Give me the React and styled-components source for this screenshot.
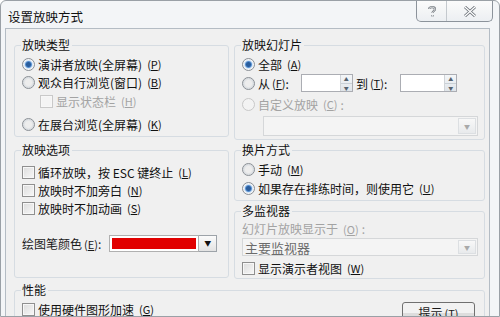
import React from "react";
import styled, { createGlobalStyle } from "styled-components";

const Global = createGlobalStyle`
  html, body { margin: 0; padding: 0; background: #fff; }
  body {
    width: 500px;
    height: 317px;
    overflow: hidden;
    font-family: "Noto Sans CJK SC", "Liberation Sans", sans-serif;
    font-size: 12px;
    color: #1a1a1a;
  }
`;

const Window = styled.div`
  width: 500px;
  height: 317px;
  box-sizing: border-box;
  background: #f3f5f7;
  border: 1px solid #9aa0a6;
  border-radius: 6px 6px 0 0;
  display: flex;
  flex-direction: column;
  overflow: hidden;
`;

const TitleBar = styled.div`
  height: 27px;
  flex: none;
  display: flex;
  justify-content: space-between;
  align-items: flex-start;
  padding-left: 7px;
`;

const Title = styled.div`
  margin-top: 6px;
  font-size: 12.5px;
  color: #111;
`;

const Caption = styled.div`
  display: flex;
  margin-right: 6px;
  height: 20px;
  border: 1px solid #8c939b;
  border-top: none;
  border-radius: 0 0 5px 5px;
  background: linear-gradient(#fbfbfb, #eceff2);
`;

const CapBtn = styled.div`
  width: ${(p) => p.w}px;
  display: flex;
  align-items: center;
  justify-content: center;
  & + & { border-left: 1px solid #c4c9ce; }
`;

const Client = styled.div`
  flex: 1;
  margin: 0 9px 0 4px;
  background: #f0f0f0;
  border: 1px solid #b4bcc4;
  border-bottom: none;
  padding: 8px 4px 0 8px;
  display: flex;
  flex-direction: column;
  gap: 3px;
`;

const Columns = styled.div`
  display: grid;
  grid-template-columns: 215px 251px;
  column-gap: 5px;
`;

const Col = styled.div`
  display: flex;
  flex-direction: column;
  gap: ${(p) => p.gap || 4}px;
`;

const Group = styled.fieldset`
  margin: 0;
  min-width: 0;
  border: 1px solid #d6dce2;
  border-radius: 3px;
  padding: ${(p) => p.pt ?? 2}px 6px ${(p) => p.pb ?? 3}px 7px;
  box-sizing: border-box;
  display: flex;
  flex-direction: column;
  gap: ${(p) => p.gap || 0}px;
`;

const Legend = styled.legend`
  padding: 0 2px 0 1px;
  margin-left: -1px;
  line-height: 16px;
  color: #111;
`;

const Row = styled.label`
  display: flex;
  align-items: center;
  height: ${(p) => p.h || 18}px;
  gap: ${(p) => p.g ?? 3}px;
  margin-top: ${(p) => p.mt || 0}px;
  padding-left: ${(p) => p.indent || 0}px;
  color: ${(p) => (p.disabled ? "#a3a3a3" : "#111")};
  white-space: nowrap;
`;

const Radio = styled.span`
  width: 11px;
  height: 11px;
  flex: none;
  border-radius: 50%;
  border: 1px solid ${(p) => (p.disabled ? "#c8c8c8" : "#8a8f95")};
  background: ${(p) =>
    p.checked
      ? "radial-gradient(circle, #2a5d9c 0 2px, #5a93d4 3px, #d7e6f5 4px, #f4f6f8 5px)"
      : p.disabled
      ? "#f3f3f3"
      : "radial-gradient(circle, #ededed 0 3px, #d9dde1 5px, #f6f6f6 6px)"};
`;

const Check = styled.span`
  width: 11px;
  height: 11px;
  flex: none;
  border: 1px solid ${(p) => (p.disabled ? "#c9c9c9" : "#8f8f8f")};
  background: ${(p) =>
    p.disabled ? "#f4f4f4" : "linear-gradient(135deg, #dcdcdc, #f8f8f8)"};
  box-shadow: inset 0 0 0 1px #f7f7f7;
`;

const Key = styled.span`
  margin-left: 2px;
  font-size: 11px;
`;

const Gap = styled.span`
  width: ${(p) => p.w}px;
  flex: none;
`;

const Spin = styled.div`
  width: ${(p) => p.w}px;
  height: 18px;
  flex: none;
  box-sizing: border-box;
  border: 1px solid #abadb3;
  background: #fff;
  display: flex;
  justify-content: flex-end;
`;

const SpinBtns = styled.div`
  width: 11px;
  display: flex;
  flex-direction: column;
  border-left: 1px solid #d0d4d8;
  background: linear-gradient(#f4f6f8, #dfe4e9);
`;

const SpinHalf = styled.div`
  flex: 1;
  display: flex;
  align-items: center;
  justify-content: center;
  font-size: 5px;
  color: #56626e;
  & + & { border-top: 1px solid #c9d0d6; }
`;

const Combo = styled.div`
  height: ${(p) => p.h || 19}px;
  box-sizing: border-box;
  margin: ${(p) => p.mt || 0}px 0 0 ${(p) => p.ml || 0}px;
  border: 1px solid ${(p) => (p.disabled ? "#d5d7d9" : "#b5b9bd")};
  background: ${(p) => (p.disabled ? "#f4f4f4" : "#f0f0f0")};
  display: flex;
  align-items: center;
  justify-content: space-between;
  padding-left: 2px;
  color: #6b6b6b;
  font-size: 13px;
`;

const ComboBtn = styled.div`
  width: 16px;
  height: calc(100% - 4px);
  margin-right: 1px;
  border: 1px solid #dcdfe2;
  background: linear-gradient(#f8f8f8, #e8eaec);
  display: flex;
  align-items: center;
  justify-content: center;
  font-size: 6px;
  color: #a9a9a9;
`;

const PenRow = styled.div`
  display: flex;
  align-items: center;
  height: 18px;
  margin-top: 17px;
`;

const ColorPick = styled.div`
  display: flex;
  height: 17px;
  margin-left: 8px;
`;

const Swatch = styled.div`
  width: 84px;
  border: 1px solid #b0b0b0;
  padding: 2px;
  background: #fff;
  display: flex;
  & > div { flex: 1; background: #e10000; }
`;

const DropBtn = styled.div`
  width: 17px;
  border: 1px solid #9da3a9;
  border-left: none;
  background: linear-gradient(#fbfbfb, #e3e3e3);
  display: flex;
  align-items: center;
  justify-content: center;
  font-size: 7px;
  color: #111;
`;

const BottomRow = styled.div`
  display: flex;
  justify-content: space-between;
  align-items: flex-start;
`;

const Button = styled.div`
  width: 73px;
  height: 21px;
  margin: 2px 3px 0 0;
  box-sizing: border-box;
  border: 1px solid #707070;
  border-radius: 3px;
  background: linear-gradient(#f2f2f2 50%, #dddddd 50%);
  display: flex;
  align-items: center;
  justify-content: center;
`;

const K = ({ c }) => (
  <Key>
    (<u>{c}</u>)
  </Key>
);

const SpinBox = ({ w }) => (
  <Spin w={w}>
    <SpinBtns>
      <SpinHalf>▲</SpinHalf>
      <SpinHalf>▼</SpinHalf>
    </SpinBtns>
  </Spin>
);

export default function App() {
  return (
    <>
      <Global />
      <Window>
        <TitleBar>
          <Title>设置放映方式</Title>
          <Caption>
            <CapBtn w={29}>
              <svg width="10" height="13" viewBox="0 0 10 13">
                <path
                  d="M2 4 C2 1.5 8 1.5 8 4 C8 6 5.5 6 5.5 8 M5.5 10 v1.5"
                  fill="none"
                  stroke="#6d737a"
                  strokeWidth="2.2"
                />
                <path
                  d="M2 4 C2 1.5 8 1.5 8 4 C8 6 5.5 6 5.5 8 M5.5 10 v1.5"
                  fill="none"
                  stroke="#fff"
                  strokeWidth="0.8"
                />
              </svg>
            </CapBtn>
            <CapBtn w={45}>
              <svg width="14" height="11" viewBox="0 0 14 11">
                <path d="M2 1 L12 10 M12 1 L2 10" stroke="#6d737a" strokeWidth="3" />
                <path d="M2 1 L12 10 M12 1 L2 10" stroke="#fff" strokeWidth="1.2" />
              </svg>
            </CapBtn>
          </Caption>
        </TitleBar>
        <Client>
          <Columns>
            <Col gap={5}>
              <Group pt={2} pb={3}>
                <Legend>放映类型</Legend>
                <Row>
                  <Radio checked />
                  演讲者放映(全屏幕)<K c="P" />
                </Row>
                <Row>
                  <Radio />
                  观众自行浏览(窗口)<K c="B" />
                </Row>
                <Row indent={18} disabled mt={1}>
                  <Check disabled />
                  显示状态栏<K c="H" />
                </Row>
                <Row mt={5}>
                  <Radio />
                  在展台浏览(全屏幕)<K c="K" />
                </Row>
              </Group>
              <Group pt={5} pb={25}>
                <Legend>放映选项</Legend>
                <Row>
                  <Check />
                  循环放映，按 ESC 键终止<K c="L" />
                </Row>
                <Row>
                  <Check />
                  放映时不加旁白<K c="N" />
                </Row>
                <Row>
                  <Check />
                  放映时不加动画<K c="S" />
                </Row>
                <PenRow>
                  <span>
                    绘图笔颜色<K c="E" />:
                  </span>
                  <ColorPick>
                    <Swatch>
                      <div />
                    </Swatch>
                    <DropBtn>▼</DropBtn>
                  </ColorPick>
                </PenRow>
              </Group>
            </Col>
            <Col gap={2}>
              <Group pt={2} pb={3}>
                <Legend>放映幻灯片</Legend>
                <Row>
                  <Radio checked />
                  全部<K c="A" />
                </Row>
                <Row mt={1} g={0}>
                  <Radio />
                  <Gap w={3} />
                  从<K c="F" />:
                  <Gap w={12} />
                  <SpinBox w={52} />
                  <Gap w={3} />
                  到<K c="T" />:
                  <Gap w={13} />
                  <SpinBox w={57} />
                </Row>
                <Row disabled mt={3}>
                  <Radio disabled />
                  自定义放映<K c="C" />:
                </Row>
                <Combo disabled ml={21} mt={3} h={20}>
                  <span />
                  <ComboBtn>▼</ComboBtn>
                </Combo>
              </Group>
              <Group pt={2} pb={3}>
                <Legend>换片方式</Legend>
                <Row>
                  <Radio />
                  手动<K c="M" />
                </Row>
                <Row mt={1}>
                  <Radio checked />
                  如果存在排练时间，则使用它<K c="U" />
                </Row>
              </Group>
              <Group pt={1} pb={1}>
                <Legend>多监视器</Legend>
                <Row disabled h={17}>
                  幻灯片放映显示于<K c="O" />:
                </Row>
                <Combo disabled mt={1} h={18}>
                  <span>主要监视器</span>
                  <ComboBtn>▼</ComboBtn>
                </Combo>
                <Row mt={3}>
                  <Check />
                  显示演示者视图<K c="W" />
                </Row>
              </Group>
            </Col>
          </Columns>
          <Group pt={2} pb={3}>
            <Legend>性能</Legend>
            <BottomRow>
              <Row>
                <Check />
                使用硬件图形加速<K c="G" />
              </Row>
              <Button>
                提示<K c="T" />
              </Button>
            </BottomRow>
          </Group>
        </Client>
      </Window>
    </>
  );
}
